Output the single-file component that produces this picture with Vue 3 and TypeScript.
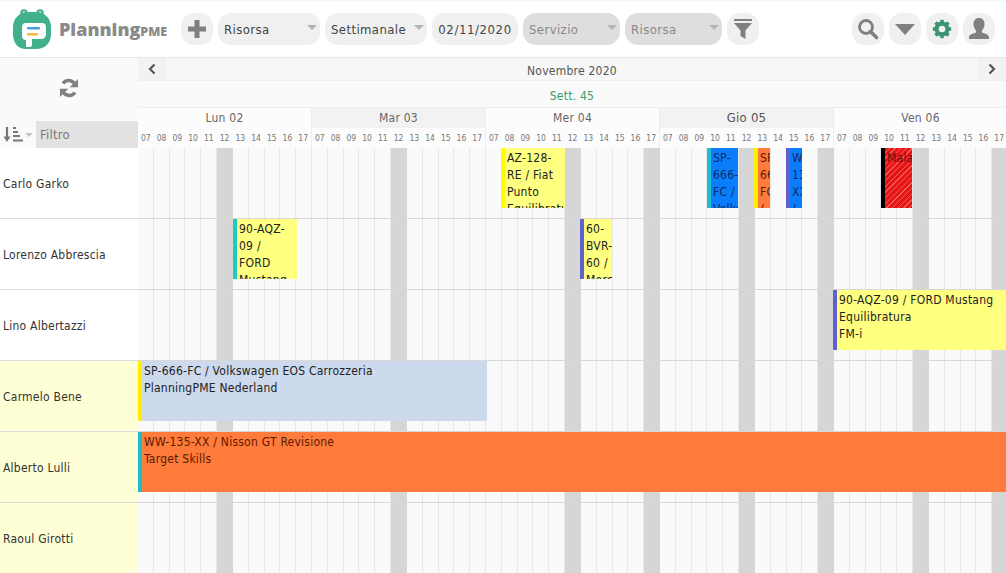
<template>
  <div class="page">
    <header class="toolbar">
      <div class="logo">
        <svg class="logo-mark" viewBox="0 0 38 42" width="38" height="42">
          <circle cx="11" cy="5" r="3.800" fill="#41b08c" />
          <circle cx="27" cy="5" r="3.800" fill="#41b08c" />
          <circle cx="11" cy="4.600" r="1.300" fill="#d8f2e8" />
          <circle cx="27" cy="4.600" r="1.300" fill="#d8f2e8" />
          <path d="M15 4h8c9 0 15 7 15 15v7c0 9-6 15-15 15H13C5 41 0 35 0 26v-7C0 11 6 4 15 4z" fill="#41b08c" />
          <path d="M13 15h16c3 0 4 2 4 4v7c0 3-2 5-5 5H19v6c0 1-1 2-3 2h-3V32c-3 0-4-2-4-4v-9c0-2 1-4 4-4z" fill="#fff" />
          <rect x="14" y="19" width="13" height="2.600" rx="1" fill="#4a9de0" />
          <rect x="14" y="25" width="11" height="2.600" rx="1" fill="#f4b740" />
        </svg>
        <span class="logo-text">Planning<small>PME</small></span>
      </div>

      <button class="tool square">
        <svg viewBox="0 0 20 20" width="20" height="20"><path d="M7.500 1h5v6.500H19v5h-6.500V19h-5v-6.500H1v-5h6.500z" fill="#808080" /></svg>
      </button>
      <div class="tool select wide"><span>Risorsa</span><i class="caret"></i></div>
      <div class="tool select wide"><span>Settimanale</span><i class="caret"></i></div>
      <div class="tool date">02/11/2020</div>
      <div class="tool select off servizio"><span>Servizio</span><i class="caret"></i></div>
      <div class="tool select off servizio"><span>Risorsa</span><i class="caret"></i></div>
      <button class="tool square">
        <svg viewBox="0 0 20 22" width="20" height="22"><path d="M1 1h18v2H1zM1 5h18l-6.500 7.500V21l-5-3v-5.500z" fill="#808080" /></svg>
      </button>

      <div class="tools-right">
        <button class="tool square">
          <svg viewBox="0 0 22 22" width="22" height="22"><circle cx="9" cy="9" r="6.500" fill="none" stroke="#808080" stroke-width="2.800" /><path d="M13.500 13.500l6 6" stroke="#808080" stroke-width="3.600" stroke-linecap="round" /></svg>
        </button>
        <button class="tool square">
          <svg viewBox="0 0 20 12" width="20" height="12"><path d="M0 1h20L10 12z" fill="#808080" /></svg>
        </button>
        <button class="tool square">
          <svg viewBox="0 0 24 24" width="20" height="20">
            <circle cx="12" cy="12" r="6.500" fill="none" stroke="#3c9470" stroke-width="5" />
            <g stroke="#3c9470" stroke-width="4.400">
              <path v-for="a in [0, 45, 90, 135]" :key="a" d="M12 1v22" :transform="`rotate(${a} 12 12)`" />
            </g>
            <circle cx="12" cy="12" r="4" fill="#f0f0f0" />
          </svg>
        </button>
        <button class="tool square">
          <svg viewBox="0 0 22 22" width="22" height="22"><path d="M11 0c3.500 0 5.500 2.500 5.500 6 0 3-1 5-2.500 6.500v2c3 1 7 2 7 5V21H1v-1.500c0-3 4-4 7-5v-2C6.500 11 5.500 9 5.500 6 5.500 2.500 7.500 0 11 0z" fill="#808080" /></svg>
        </button>
      </div>
    </header>

    <main class="planner">
      <aside class="side">
        <div class="side-head">
          <div class="refresh">
            <svg viewBox="0 0 20 20" width="20" height="20">
              <path d="M16.500 8A7 7 0 0 0 4 5.500" fill="none" stroke="#808080" stroke-width="3.400" />
              <path d="M19 1v8.300h-8.300z" fill="#808080" />
              <path d="M3.500 12A7 7 0 0 0 16 14.500" fill="none" stroke="#808080" stroke-width="3.400" />
              <path d="M1 19v-8.300h8.300z" fill="#808080" />
            </svg>
          </div>
          <div class="filter-row">
            <div class="sort">
              <svg viewBox="0 0 20 17" width="20" height="17">
                <path d="M4 1v12" fill="none" stroke="#777" stroke-width="2.200" />
                <path d="M0.500 10.500h7L4 16z" fill="#777" />
                <path d="M10 2h3M10 6h5M10 10h7M10 14.500h10" stroke="#777" stroke-width="2" />
              </svg>
              <i class="caret small"></i>
            </div>
            <div class="filter">Filtro</div>
          </div>
        </div>
        <div v-for="r in resources" :key="r.name" class="name" :class="{ tinted: r.tinted }">{{ r.name }}</div>
      </aside>

      <section class="timeline">
        <div class="month-row">
          <button class="nav"><svg viewBox="0 0 8 12" width="8" height="12"><path d="M6.500 1.500L2 6l4.500 4.500" fill="none" stroke="#555" stroke-width="2.200" /></svg></button>
          <span class="month">Novembre 2020</span>
          <button class="nav"><svg viewBox="0 0 8 12" width="8" height="12"><path d="M1.500 1.500L6 6l-4.500 4.500" fill="none" stroke="#555" stroke-width="2.200" /></svg></button>
        </div>
        <div class="week-row">Sett. 45</div>
        <div class="days">
          <div v-for="(d, i) in days" :key="d.label" class="day" :class="{ shaded: i === 1 || i === 3 }">
            <div class="day-label" :class="{ today: i === 3 }">{{ d.label }}</div>
            <div class="hours"><span v-for="h in hours" :key="h">{{ h }}</span></div>
          </div>
        </div>

        <div v-for="(r, ri) in resources" :key="r.name" class="row">
          <div v-for="d in days" :key="d.label" class="row-day">
            <div v-for="(h, hi) in hours" :key="h" class="cell" :class="{ closed: d.closed.includes(hi) }"></div>
          </div>
          <div
            v-for="e in eventsFor(ri)"
            :key="e.text"
            class="event"
            :class="e.kind"
            :style="{ left: e.left + 'px', width: e.width + 'px', background: e.bg, borderLeftColor: e.bar, color: e.color }"
          >{{ e.text }}</div>
        </div>
      </section>
    </main>
  </div>
</template>

<script setup lang="ts">
interface PlanEvent {
  row: number
  left: number
  width: number
  text: string
  bg: string
  bar: string
  color?: string
  kind?: string
}

const hours = ['07', '08', '09', '10', '11', '12', '13', '14', '15', '16', '17']

const days = [
  { label: 'Lun 02', closed: [5] },
  { label: 'Mar 03', closed: [5] },
  { label: 'Mer 04', closed: [5, 10] },
  { label: 'Gio 05', closed: [5, 10] },
  { label: 'Ven 06', closed: [5, 10] },
]

const resources = [
  { name: 'Carlo Garko', tinted: false },
  { name: 'Lorenzo Abbrescia', tinted: false },
  { name: 'Lino Albertazzi', tinted: false },
  { name: 'Carmelo Bene', tinted: true },
  { name: 'Alberto Lulli', tinted: true },
  { name: 'Raoul Girotti', tinted: true },
]

const events: PlanEvent[] = [
  { row: 0, left: 363, width: 64, text: 'AZ-128-RE / Fiat Punto Equilibratura', bg: '#ffff80', bar: '#ffff00' },
  { row: 0, left: 569, width: 31, text: 'SP-666-FC / Volkswagen', bg: '#0a7dfa', bar: '#1fbcd4', color: '#0b2a66' },
  { row: 0, left: 616, width: 16, text: 'SP-666-FC / Fiat', bg: '#ff7b3c', bar: '#ffee00', color: '#5a1a00' },
  { row: 0, left: 648, width: 16, text: 'WW-135-XX / Nisson', bg: '#0a7dfa', bar: '#6060d0', color: '#0b2a66' },
  { row: 0, left: 743, width: 31, text: 'Malattia', bg: '#e81515', bar: '#000000', color: '#6a0f0f', kind: 'hatched' },
  { row: 1, left: 95, width: 64, text: '90-AQZ-09 /\nFORD Mustang', bg: '#ffff80', bar: '#20c8c0' },
  { row: 1, left: 442, width: 32, text: '60-BVR-60 / Mercedes', bg: '#ffff80', bar: '#6060d0' },
  { row: 2, left: 695, width: 173, text: '90-AQZ-09 / FORD Mustang\nEquilibratura\nFM-i', bg: '#ffff80', bar: '#6060d0' },
  { row: 3, left: 0, width: 349, text: 'SP-666-FC / Volkswagen EOS Carrozzeria\nPlanningPME Nederland', bg: '#cdd9ec', bar: '#ffee00' },
  { row: 4, left: 0, width: 868, text: 'WW-135-XX / Nisson GT Revisione\nTarget Skills', bg: '#ff7b3c', bar: '#16c0c8', color: '#5a1a00' },
]

const eventsFor = (row: number) => events.filter((e) => e.row === row)
</script>

<style scoped>
.page {
  width: 1006px;
  height: 573px;
  overflow: hidden;
  background: #fff;
  font-family: "DejaVu Sans", "Noto Sans", sans-serif;
  font-stretch: condensed;
  font-size: 12px;
  letter-spacing: 0.24px;
  color: #333;
}

.toolbar {
  display: flex;
  align-items: center;
  gap: 5px;
  height: 58px;
  box-sizing: border-box;
  padding: 0 11px 0 13px;
  border-top: 1px solid #f0fbf9;
  border-bottom: 1px solid #e6e6e6;
}

.logo {
  display: flex;
  align-items: center;
  gap: 8px;
  width: 163px;
  flex: none;
}

.logo-text {
  font-family: "Open Sans", sans-serif;
  font-stretch: normal;
  font-weight: 800;
  font-size: 18px;
  letter-spacing: 0;
  color: #8a8a8a;
}

.logo-text small {
  font-size: 12.500px;
}

.tool {
  display: flex;
  align-items: center;
  flex: none;
  height: 32px;
  box-sizing: border-box;
  border: 0;
  border-radius: 13px;
  background: #f0f0f0;
  padding: 0;
  font: inherit;
  font-size: 13px;
  letter-spacing: 0.4px;
  color: #444;
}

.square {
  width: 32px;
  justify-content: center;
}

.select {
  justify-content: space-between;
  padding: 0 3px 0 6px;
}

.wide {
  width: 102px;
}

.date {
  width: 86px;
  justify-content: center;
  letter-spacing: 0.6px;
}

.servizio {
  width: 97px;
}

.off {
  background: #dedede;
  color: #888;
}

.caret {
  width: 0;
  height: 0;
  margin-top: -4px;
  border-left: 5px solid transparent;
  border-right: 5px solid transparent;
  border-top: 5px solid #b4b4b4;
}

.caret.small {
  margin-top: 0;
  border-left-width: 4px;
  border-right-width: 4px;
  border-top-width: 4px;
  border-top-color: #c4c4c4;
}

.tools-right {
  display: flex;
  gap: 5px;
  margin-left: auto;
}

.planner {
  display: flex;
  height: 515px;
}

.side {
  flex: none;
  width: 138px;
  background: #fafafa;
}

.side-head {
  display: flex;
  flex-direction: column;
  height: 90px;
}

.refresh {
  flex: 1;
  display: flex;
  align-items: center;
  justify-content: center;
  padding-bottom: 4px;
}

.filter-row {
  display: flex;
  height: 27px;
}

.sort {
  display: flex;
  align-items: center;
  gap: 2px;
  width: 36px;
  padding-left: 3px;
  box-sizing: border-box;
}

.filter {
  flex: 1;
  display: flex;
  align-items: center;
  padding-left: 4px;
  background: #e2e2e2;
  font-size: 13px;
  color: #777;
}

.name {
  display: flex;
  align-items: center;
  height: 71px;
  box-sizing: border-box;
  padding: 2px 0 0 3px;
  background: #fff;
  border-bottom: 1px solid #ddd;
  font-size: 12px;
}

.name.tinted {
  background: #ffffd6;
}

.timeline {
  flex: 1;
  min-width: 0;
  background: #fafafa;
}

.month-row {
  display: flex;
  align-items: center;
  height: 23px;
  background: #f7f7f7;
  border-bottom: 1px solid #eee;
  box-sizing: border-box;
}

.month {
  flex: 1;
  text-align: center;
  font-size: 12px;
  color: #555;
  padding-top: 3px;
}

.nav {
  width: 28px;
  height: 22px;
  flex: none;
  border: 0;
  padding: 0;
  background: #f2f2f2;
  display: flex;
  align-items: center;
  justify-content: center;
}

.week-row {
  height: 27px;
  line-height: 30px;
  text-align: center;
  font-size: 12px;
  color: #3a9a6e;
  border-bottom: 1px solid #eee;
  box-sizing: border-box;
  background: #fafafa;
}

.days {
  display: flex;
  width: 870px;
  height: 40px;
}

.day {
  flex: none;
  width: 174px;
  border-right: 1px solid #eee;
  box-sizing: border-box;
  background: #fcfcfc;
}

.day-label {
  height: 20px;
  line-height: 20px;
  text-align: center;
  font-size: 12px;
  color: #666;
}

.day.shaded .day-label {
  background: #f2f2f2;
}

.day-label.today {
  color: #555;
  font-size: 13px;
}

.hours {
  display: flex;
  height: 20px;
  align-items: center;
  letter-spacing: 0;
}

.hours span {
  flex: 1;
  text-align: center;
  font-size: 8.500px;
  color: #777;
}

.row {
  position: relative;
  display: flex;
  width: 870px;
  height: 71px;
  box-sizing: border-box;
  border-bottom: 1px solid #d8d8d8;
}

.row-day {
  flex: none;
  width: 174px;
  display: flex;
}

.cell {
  flex: 1;
  border-right: 1px solid #e8e8e8;
}

.cell.closed {
  background: #d6d6d6;
  border-right-color: #d6d6d6;
}

.event {
  position: absolute;
  top: 0;
  height: 60px;
  box-sizing: border-box;
  overflow: hidden;
  border-left: 4px solid;
  padding: 2px 1px 0 2px;
  font-size: 12px;
  line-height: 17px;
  white-space: pre-line;
  color: #222;
}

.event.hatched {
  background-image: repeating-linear-gradient(135deg, transparent 0 3px, rgba(255, 255, 255, 0.3) 3px 4px) !important;
  background-color: #e81515 !important;
}
</style>

<style>
html,
body {
  margin: 0;
  background: #fff;
}
</style>
